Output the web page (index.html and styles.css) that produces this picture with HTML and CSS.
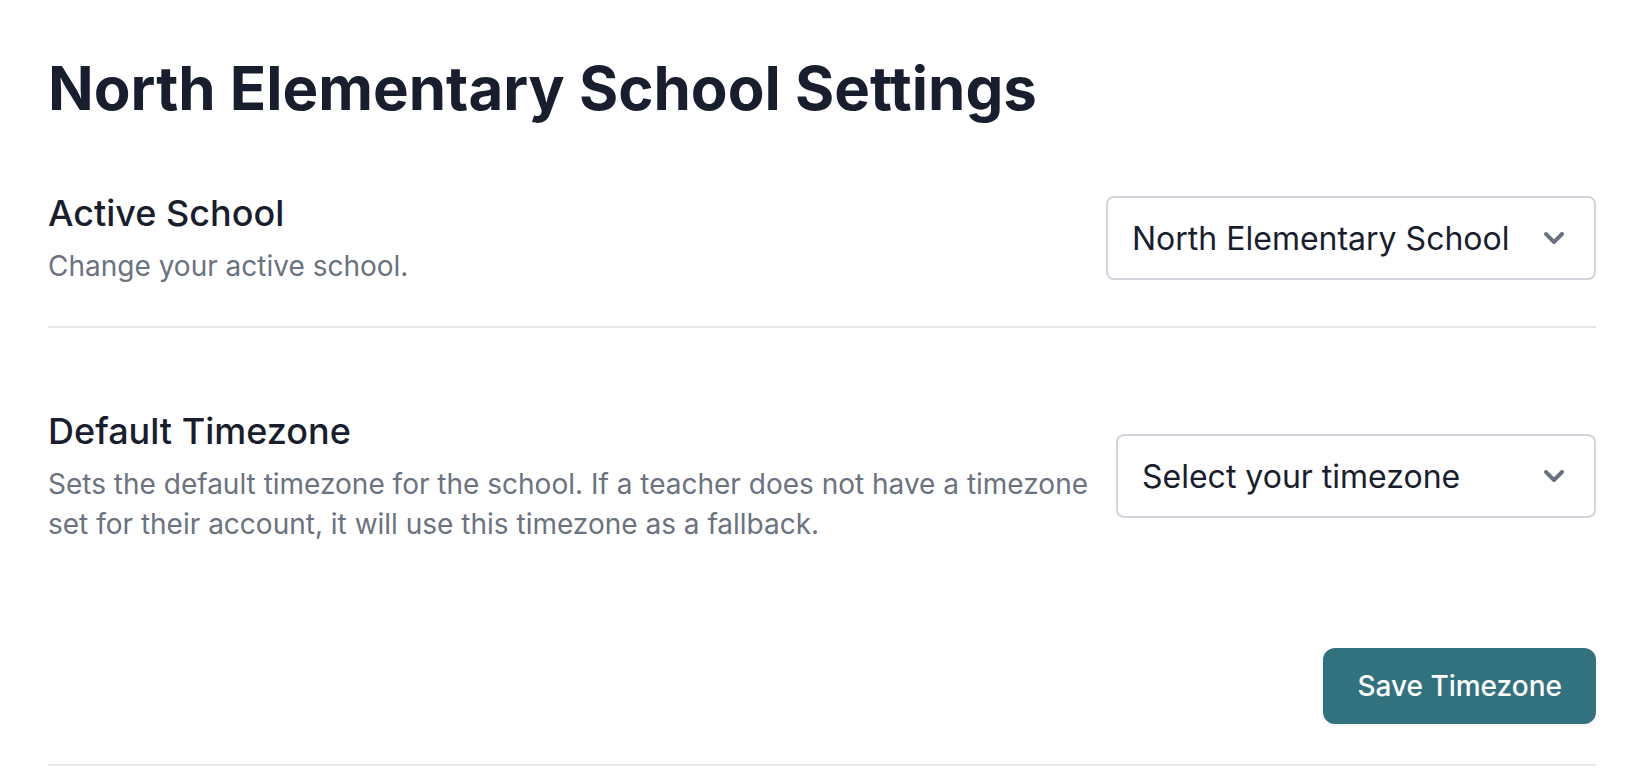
FILE: index.html
```html
<!DOCTYPE html>
<html lang="en">
<head>
<meta charset="utf-8">
<title>North Elementary School Settings</title>
<link rel="stylesheet" href="styles.css">
</head>
<body>
<main class="settings">
  <h1 class="page-title">North Elementary School Settings</h1>
  <section class="row row-school">
    <div class="row-text">
      <h2 class="row-title"><label for="school">Active School</label></h2>
      <p class="row-desc">Change your active school.</p>
    </div>
    <div class="picker picker-school">
      <select class="picker-select" id="school"><option>North Elementary School</option></select>
      <svg class="picker-icon" viewBox="0 0 20 20" fill="currentColor" aria-hidden="true"><path fill-rule="evenodd" d="M5.293 7.293a1 1 0 011.414 0L10 10.586l3.293-3.293a1 1 0 111.414 1.414l-4 4a1 1 0 01-1.414 0l-4-4a1 1 0 010-1.414z" clip-rule="evenodd"/></svg>
    </div>
  </section>
  <form class="timezone">
    <div class="row">
      <div class="row-text">
        <h2 class="row-title"><label for="timezone">Default Timezone</label></h2>
        <p class="row-desc">Sets the default timezone for the school. If a teacher does not have a timezone set for their account, it will use this timezone as a fallback.</p>
      </div>
      <div class="picker picker-timezone">
        <select class="picker-select" id="timezone"><option>Select your timezone</option></select>
        <svg class="picker-icon" viewBox="0 0 20 20" fill="currentColor" aria-hidden="true"><path fill-rule="evenodd" d="M5.293 7.293a1 1 0 011.414 0L10 10.586l3.293-3.293a1 1 0 111.414 1.414l-4 4a1 1 0 01-1.414 0l-4-4a1 1 0 010-1.414z" clip-rule="evenodd"/></svg>
      </div>
    </div>
    <div class="actions"><button class="save" type="button">Save Timezone</button></div>
  </form>
</main>
</body>
</html>
```
FILE: styles.css
```css
* { box-sizing: border-box; }
body { margin: 0; background: #fff; color: #191e2e; font-family: Inter, "Liberation Sans", sans-serif; }
h1, h2, p { margin: 0; }
.settings { padding: 48px 46px 0 48px; }
.page-title { font-size: 60px; line-height: 80px; font-weight: 700; }
.row { display: flex; align-items: center; justify-content: space-between; gap: 24px; }
.row-school { margin-top: 62px; padding-bottom: 40px; border-bottom: 2px solid #e5e7eb; }
.row-text { flex: 1; }
.row-title { font-size: 36px; line-height: 46px; font-weight: 500; }
.row-desc { margin-top: 10px; font-size: 28px; line-height: 40px; color: #6b7280; }
.picker { display: grid; align-items: center; flex: none; }
.picker-school { width: 490px; }
.picker-timezone { width: 480px; }
.picker-select { grid-area: 1 / 1; width: 100%; height: 84px; margin: 0; padding: 2px 80px 0 24px; border: 2px solid #d2d6dc; border-radius: 8px; background: #fff; color: #191e2e; font: 400 32px/48px Inter, "Liberation Sans", sans-serif; appearance: none; }
.picker-icon { grid-area: 1 / 1; justify-self: end; width: 40px; height: 40px; margin-right: 22px; color: #6b7280; pointer-events: none; }
.timezone { padding: 80px 0 40px; border-bottom: 2px solid #e5e7eb; }
.actions { display: flex; justify-content: flex-end; margin-top: 104px; }
.save { height: 76px; padding: 0 34px; border: 0; border-radius: 12px; background: #31727e; color: #fff; font: 500 28px/40px Inter, "Liberation Sans", sans-serif; box-shadow: 0 2px 4px rgba(0, 0, 0, 0.05); }
```
